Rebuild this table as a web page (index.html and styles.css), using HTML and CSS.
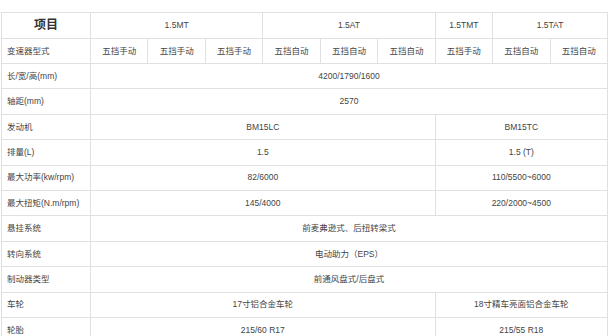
FILE: index.html
```html
<!DOCTYPE html>
<html lang="zh-CN">
<head>
<meta charset="utf-8">
<title>车型配置表</title>
<link rel="stylesheet" href="styles.css">
</head>
<body>
<table class="spec">
  <colgroup>
    <col class="c-label">
    <col><col><col><col><col><col><col><col><col>
  </colgroup>
  <tr class="head">
    <th class="title">项目</th>
    <th colspan="3">1.5MT</th>
    <th colspan="3">1.5AT</th>
    <th>1.5TMT</th>
    <th colspan="2">1.5TAT</th>
  </tr>
  <tr>
    <td class="label">变速器型式</td>
    <td>五挡手动</td><td>五挡手动</td><td>五挡手动</td>
    <td>五挡自动</td><td>五挡自动</td><td>五挡自动</td>
    <td>五挡手动</td>
    <td>五挡自动</td><td>五挡自动</td>
  </tr>
  <tr><td class="label">长/宽/高(mm)</td><td colspan="9">4200/1790/1600</td></tr>
  <tr><td class="label">轴距(mm)</td><td colspan="9">2570</td></tr>
  <tr><td class="label">发动机</td><td colspan="6">BM15LC</td><td colspan="3">BM15TC</td></tr>
  <tr><td class="label">排量(L)</td><td colspan="6">1.5</td><td colspan="3">1.5 (T)</td></tr>
  <tr><td class="label">最大功率(kw/rpm)</td><td colspan="6">82/6000</td><td colspan="3">110/5500~6000</td></tr>
  <tr><td class="label">最大扭矩(N.m/rpm)</td><td colspan="6">145/4000</td><td colspan="3">220/2000~4500</td></tr>
  <tr><td class="label">悬挂系统</td><td colspan="9">前麦弗逊式、后扭转梁式</td></tr>
  <tr><td class="label">转向系统</td><td colspan="9">电动助力（EPS）</td></tr>
  <tr><td class="label">制动器类型</td><td colspan="9">前通风盘式/后盘式</td></tr>
  <tr><td class="label">车轮</td><td colspan="6">17寸铝合金车轮</td><td colspan="3">18寸精车亮面铝合金车轮</td></tr>
  <tr><td class="label">轮胎</td><td colspan="6">215/60 R17</td><td colspan="3">215/55 R18</td></tr>
</table>
</body>
</html>
```

FILE: styles.css
```css
html, body {
  margin: 0;
  padding: 0;
  background: #ffffff;
}

body {
  font-family: "Liberation Sans", "Noto Sans CJK SC", sans-serif;
  color: #444444;
}

.spec {
  margin: 12px 0 0 1px;
  width: 607px;
  border-collapse: collapse;
  table-layout: fixed;
}

.c-label {
  width: 89px;
}

.spec th,
.spec td {
  border: 1px solid #e0e0e0;
  height: 24.4px;
  padding: 0;
  text-align: center;
  vertical-align: middle;
  font-size: 8.5px;
  font-weight: normal;
  line-height: 1;
  white-space: nowrap;
  overflow: hidden;
}

.spec .head th {
  height: 24.6px;
}

.spec .title {
  font-size: 12px;
  font-weight: bold;
  color: #333333;
}

.spec .label {
  text-align: left;
  padding-left: 5px;
}
```
